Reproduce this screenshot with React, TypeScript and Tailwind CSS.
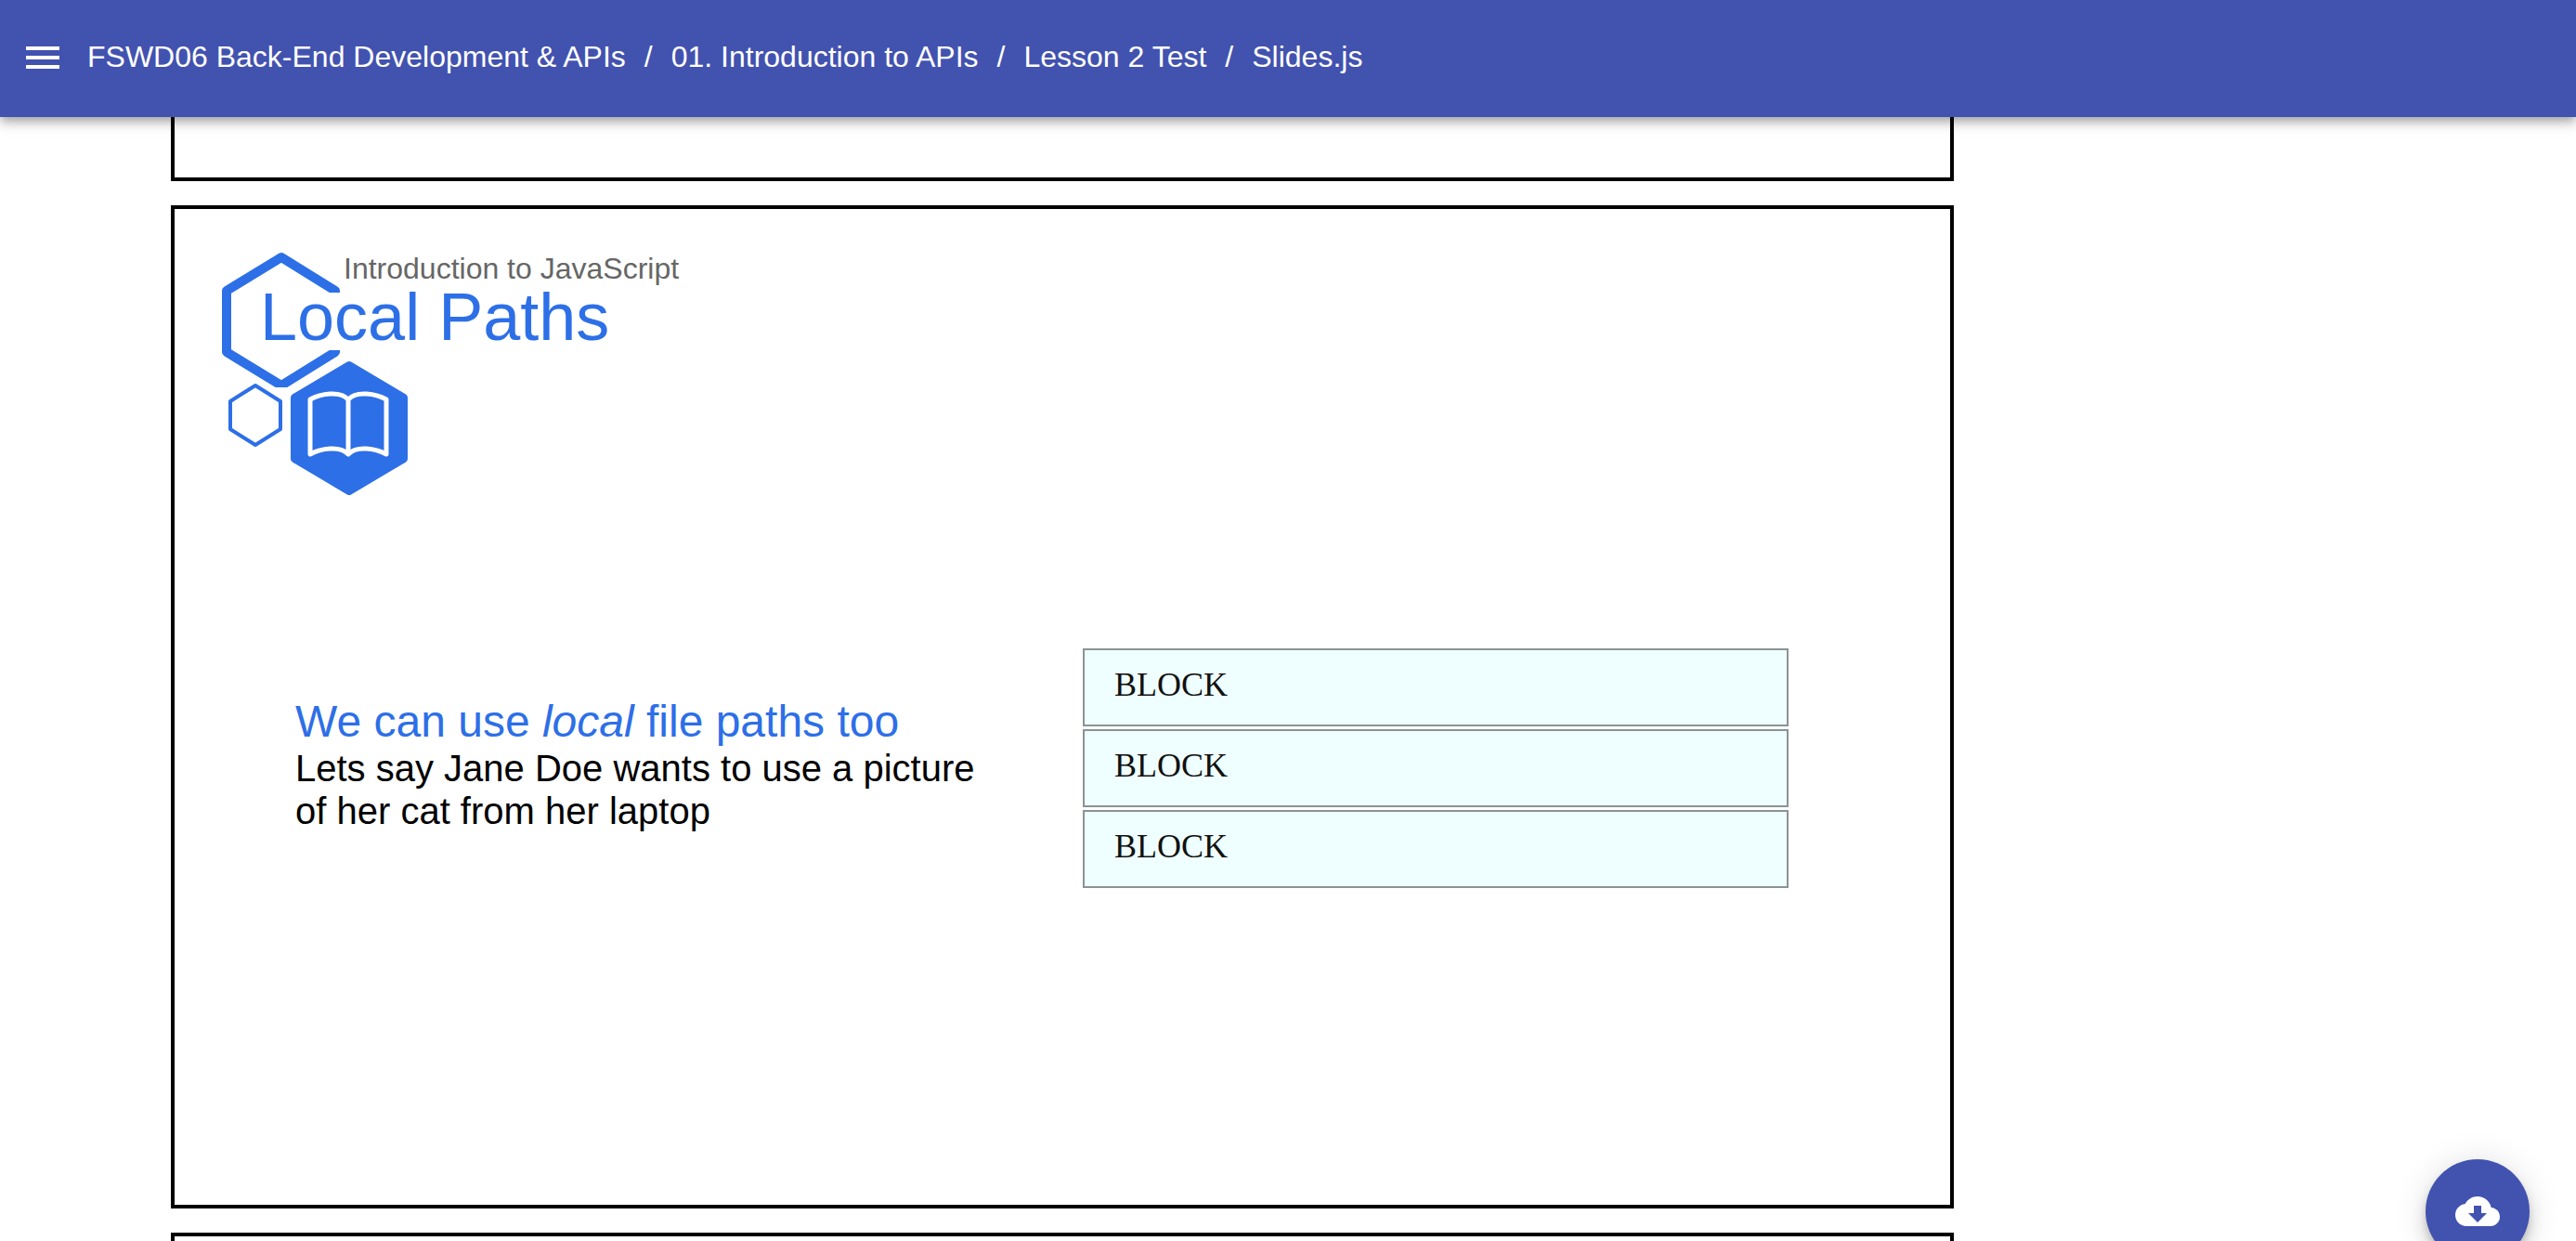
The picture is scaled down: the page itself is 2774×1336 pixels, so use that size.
import React from "react";

const BLUE = "#2d6fe7";

function Logo() {
  return (
    <svg className="block w-[204px] h-[264px]" viewBox="236 270 204 264" fill="none" stroke={BLUE} aria-hidden="true">
      <clipPath id="ring-cut">
        <path d="M230 260H370V315H340V377H370V417H230Z" />
      </clipPath>
      <path
        d="M361 330V313L303 277L244 313V379L303 415L361 379V360"
        strokeWidth="10"
        strokeLinejoin="round"
        clipPath="url(#ring-cut)"
      />
      <path d="M275 415L302 432V462L275 479L248 462V432Z" strokeWidth="4" strokeLinejoin="round" />
      <path d="M376 393L435 428V494L376 529L317 494V428Z" strokeWidth="8" strokeLinejoin="round" fill={BLUE} />
      <path
        d="M334 430C345 424 366 420 375 430C384 420 405 424 416 430V489C405 483 384 479 375 489C366 479 345 483 334 489ZM375 430V489"
        stroke="#fff"
        strokeWidth="5"
        strokeLinejoin="round"
      />
    </svg>
  );
}

const crumbs = ["FSWD06 Back-End Development & APIs", "01. Introduction to APIs", "Lesson 2 Test", "Slides.js"];

function Header() {
  return (
    <header className="relative z-10 shrink-0 flex items-start bg-[#4252af] text-white pt-[38px] pb-10 pl-[22px] shadow-[0_4px_8px_-2px_rgba(0,0,0,0.2),0_8px_10px_0_rgba(0,0,0,0.14),0_2px_20px_0_rgba(0,0,0,0.12)]">
      <button type="button" aria-label="Open menu" className="size-12 mr-6">
        <svg viewBox="0 0 24 24" className="size-12" fill="currentColor">
          <path d="M3 18h18v-2H3v2zm0-5h18v-2H3v2zm0-7v2h18V6H3z" />
        </svg>
      </button>
      <nav aria-label="Breadcrumb">
        <ol className="flex text-[32px] leading-[46px]">
          {crumbs.map((c, i) => (
            <li key={c} className="flex">
              {i > 0 && <span className="mx-5">/</span>}
              <a href="#">{c}</a>
            </li>
          ))}
        </ol>
      </nav>
    </header>
  );
}

function Block() {
  return (
    <div className="border-2 border-[#8b9393] bg-[#efffff] pl-8 pt-[17px] pb-[23px] font-['Liberation_Serif',serif] text-4xl leading-10 text-[#111]">
      BLOCK
    </div>
  );
}

export default function App() {
  return (
    <div className="h-screen overflow-hidden flex flex-col bg-white font-['Liberation_Sans',Arial,sans-serif]">
      <Header />
      <main className="flex-1 overflow-hidden pl-[184px]">
        <div className="flex flex-col gap-[26px] w-full max-w-[1920px]">
          <section className="h-[69px] border-4 border-t-0 border-black" />
          <section className="relative aspect-[16/9] border-4 border-black shrink-0 flex items-center">
            <div className="absolute left-12 top-[45px]">
              <Logo />
            </div>
            <div className="absolute left-[92px] top-12">
              <p className="pl-[90px] text-[32px] leading-8 text-[#666]">Introduction to JavaScript</p>
              <h1 className="text-7xl leading-[72px] text-[#2d6fe7]">Local Paths</h1>
            </div>
            <div className="w-full flex items-center pl-[130px] pr-[174px] pt-[132px]">
              <div className="w-[848px] pr-20 pb-2">
                <h2 className="text-5xl leading-[54px] text-[#2d6fe7]">
                  We can use <em>local</em> file paths too
                </h2>
                <p className="text-[40px] leading-[46px] text-black">
                  Lets say Jane Doe wants to use a picture of her cat from her laptop
                </p>
              </div>
              <div className="flex-1 flex flex-col gap-[3px]">
                <Block />
                <Block />
                <Block />
              </div>
            </div>
          </section>
          <section className="aspect-[16/9] border-4 border-black shrink-0" />
        </div>
      </main>
      <button
        type="button"
        aria-label="Download"
        className="fixed right-[50px] -bottom-6 size-28 rounded-full bg-[#4252af] text-white flex items-center justify-center shadow-[0_6px_10px_-2px_rgba(0,0,0,0.2),0_12px_20px_0_rgba(0,0,0,0.14),0_2px_36px_0_rgba(0,0,0,0.12)]"
      >
        <svg viewBox="0 0 24 24" className="size-12" fill="currentColor">
          <path d="M19.35 10.04C18.67 6.59 15.64 4 12 4 9.11 4 6.6 5.64 5.35 8.04 2.34 8.36 0 10.91 0 14c0 3.31 2.69 6 6 6h13c2.76 0 5-2.24 5-5 0-2.64-2.05-4.78-4.65-4.96zM17 13l-5 5-5-5h3V9h4v4h3z" />
        </svg>
      </button>
    </div>
  );
}
